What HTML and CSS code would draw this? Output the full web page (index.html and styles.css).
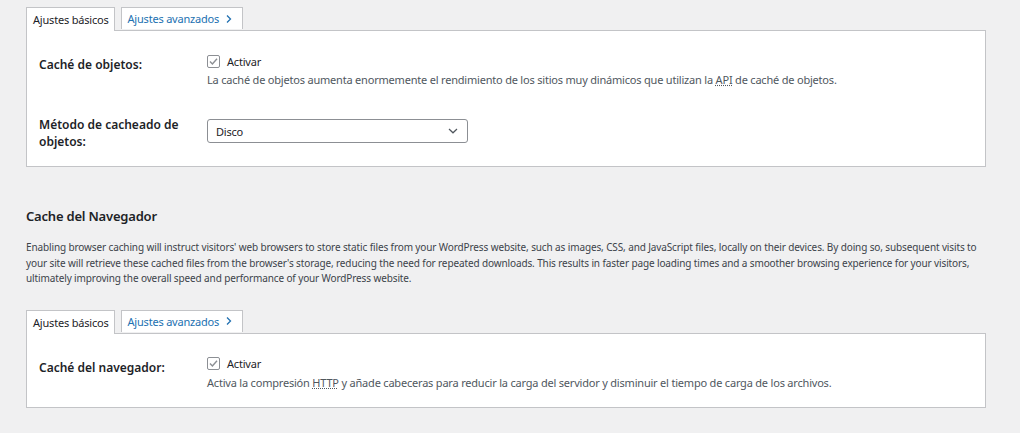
FILE: index.html
```html
<!DOCTYPE html>
<html lang="es">
<head>
    <meta charset="UTF-8">
    <meta name="viewport" content="width=device-width, initial-scale=1.0">
    <title>Ajustes de caché</title>
    <link rel="stylesheet" href="styles.css">
</head>
<body>

    <!-- Caché de objetos -->
    <div class="seccion">
        <div class="pestanas">
            <span class="pestana activa">Ajustes básicos</span>
            <a class="pestana" href="#">Ajustes avanzados
                <svg class="flecha" width="8" height="10" viewBox="0 0 8 10"><path d="M2 1.5 L5.5 5 L2 8.5" fill="none" stroke="currentColor" stroke-width="1.3"/></svg>
            </a>
        </div>
        <div class="panel">
            <div class="fila">
                <div class="etiqueta">Caché de objetos:</div>
                <div class="campo">
                    <label class="check">
                        <span class="caja"><svg width="11" height="11" viewBox="0 0 11 11"><path d="M2 5.6 L4.4 8 L9 2.8" fill="none" stroke="#8c8f94" stroke-width="1.4"/></svg></span>
                        Activar
                    </label>
                    <p class="descripcion">La caché de objetos aumenta enormemente el rendimiento de los sitios muy dinámicos que utilizan la <abbr title="Application Programming Interface">API</abbr> de caché de objetos.</p>
                </div>
            </div>
            <div class="fila fila-select">
                <div class="etiqueta">Método de cacheado de objetos:</div>
                <div class="campo">
                    <div class="select">
                        <span>Disco</span>
                        <svg width="10" height="6" viewBox="0 0 10 6"><path d="M1 1 L5 4.8 L9 1" fill="none" stroke="#50575e" stroke-width="1.2"/></svg>
                    </div>
                </div>
            </div>
        </div>
    </div>

    <!-- Cache del navegador -->
    <h2>Cache del Navegador</h2>
    <p class="intro">Enabling browser caching will instruct visitors' web browsers to store static files from your WordPress website, such as images, CSS, and JavaScript files, locally on their devices. By doing so, subsequent visits to your site will retrieve these cached files from the browser's storage, reducing the need for repeated downloads. This results in faster page loading times and a smoother browsing experience for your visitors, ultimately improving the overall speed and performance of your WordPress website.</p>

    <div class="seccion">
        <div class="pestanas">
            <span class="pestana activa">Ajustes básicos</span>
            <a class="pestana" href="#">Ajustes avanzados
                <svg class="flecha" width="8" height="10" viewBox="0 0 8 10"><path d="M2 1.5 L5.5 5 L2 8.5" fill="none" stroke="currentColor" stroke-width="1.3"/></svg>
            </a>
        </div>
        <div class="panel panel-corto">
            <div class="fila">
                <div class="etiqueta">Caché del navegador:</div>
                <div class="campo">
                    <label class="check">
                        <span class="caja"><svg width="11" height="11" viewBox="0 0 11 11"><path d="M2 5.6 L4.4 8 L9 2.8" fill="none" stroke="#8c8f94" stroke-width="1.4"/></svg></span>
                        Activar
                    </label>
                    <p class="descripcion">Activa la compresión <abbr title="Hypertext Transfer Protocol">HTTP</abbr> y añade cabeceras para reducir la carga del servidor y disminuir el tiempo de carga de los archivos.</p>
                </div>
            </div>
        </div>
    </div>

</body>
</html>
```

FILE: styles.css
```css
body {
    font-family: "Noto Sans", sans-serif;
    font-size: 11px;
    letter-spacing: -0.2px;
    color: #1d2327;
    background-color: #f0f0f1;
    margin: 0;
    padding: 7px 34px 0 26px;
}
.pestanas {
    display: flex;
    gap: 6px;
}
.pestana {
    display: flex;
    align-items: center;
    gap: 5px;
    height: 22px;
    padding: 0 9px 0 6px;
    background-color: #fff;
    border: 1px solid #c3c4c7;
    border-bottom: none;
    color: #2271b1;
    text-decoration: none;
    box-sizing: border-box;
}
.pestana.activa {
    color: #1d2327;
    height: 24px;
    padding: 0 5px 0 6px;
    margin-bottom: -1px;
    position: relative;
}
.flecha {
    margin-left: 1px;
}
.panel {
    width: 960px;
    box-sizing: border-box;
    height: 137px;
    background-color: #fff;
    border: 1px solid #c3c4c7;
    padding: 19px 12px 0;
}
.panel-corto {
    height: 75px;
}
.fila {
    display: grid;
    grid-template-columns: 168px 1fr;
}
.fila-select {
    margin-top: 31px;
}
.etiqueta {
    font-size: 12px;
    font-weight: 600;
    letter-spacing: 0;
    line-height: 17px;
    padding-top: 6px;
    width: 142px;
}
.check {
    display: flex;
    align-items: center;
    gap: 7px;
    height: 22px;
}
.caja {
    width: 11px;
    height: 11px;
    border: 1px solid #8c8f94;
    border-radius: 2px;
    display: flex;
    align-items: center;
    justify-content: center;
}
.descripcion {
    margin: 0;
    color: #50575e;
    line-height: 16px;
}
abbr {
    text-decoration: underline dotted;
}
.fila-select .etiqueta {
    padding-top: 0;
    margin-top: -3px;
}
.select {
    width: 261px;
    height: 24px;
    box-sizing: border-box;
    border: 1px solid #8c8f94;
    border-radius: 3px;
    display: flex;
    align-items: center;
    justify-content: space-between;
    padding: 0 9px 0 8px;
}
h2 {
    font-size: 13px;
    font-weight: 600;
    letter-spacing: -0.2px;
    margin: 39px 0 0;
    line-height: 20px;
}
.intro {
    font-size: 10px;
    letter-spacing: -0.12px;
    line-height: 15.5px;
    color: #3c434a;
    margin: 14px 0 23px;
}
```
